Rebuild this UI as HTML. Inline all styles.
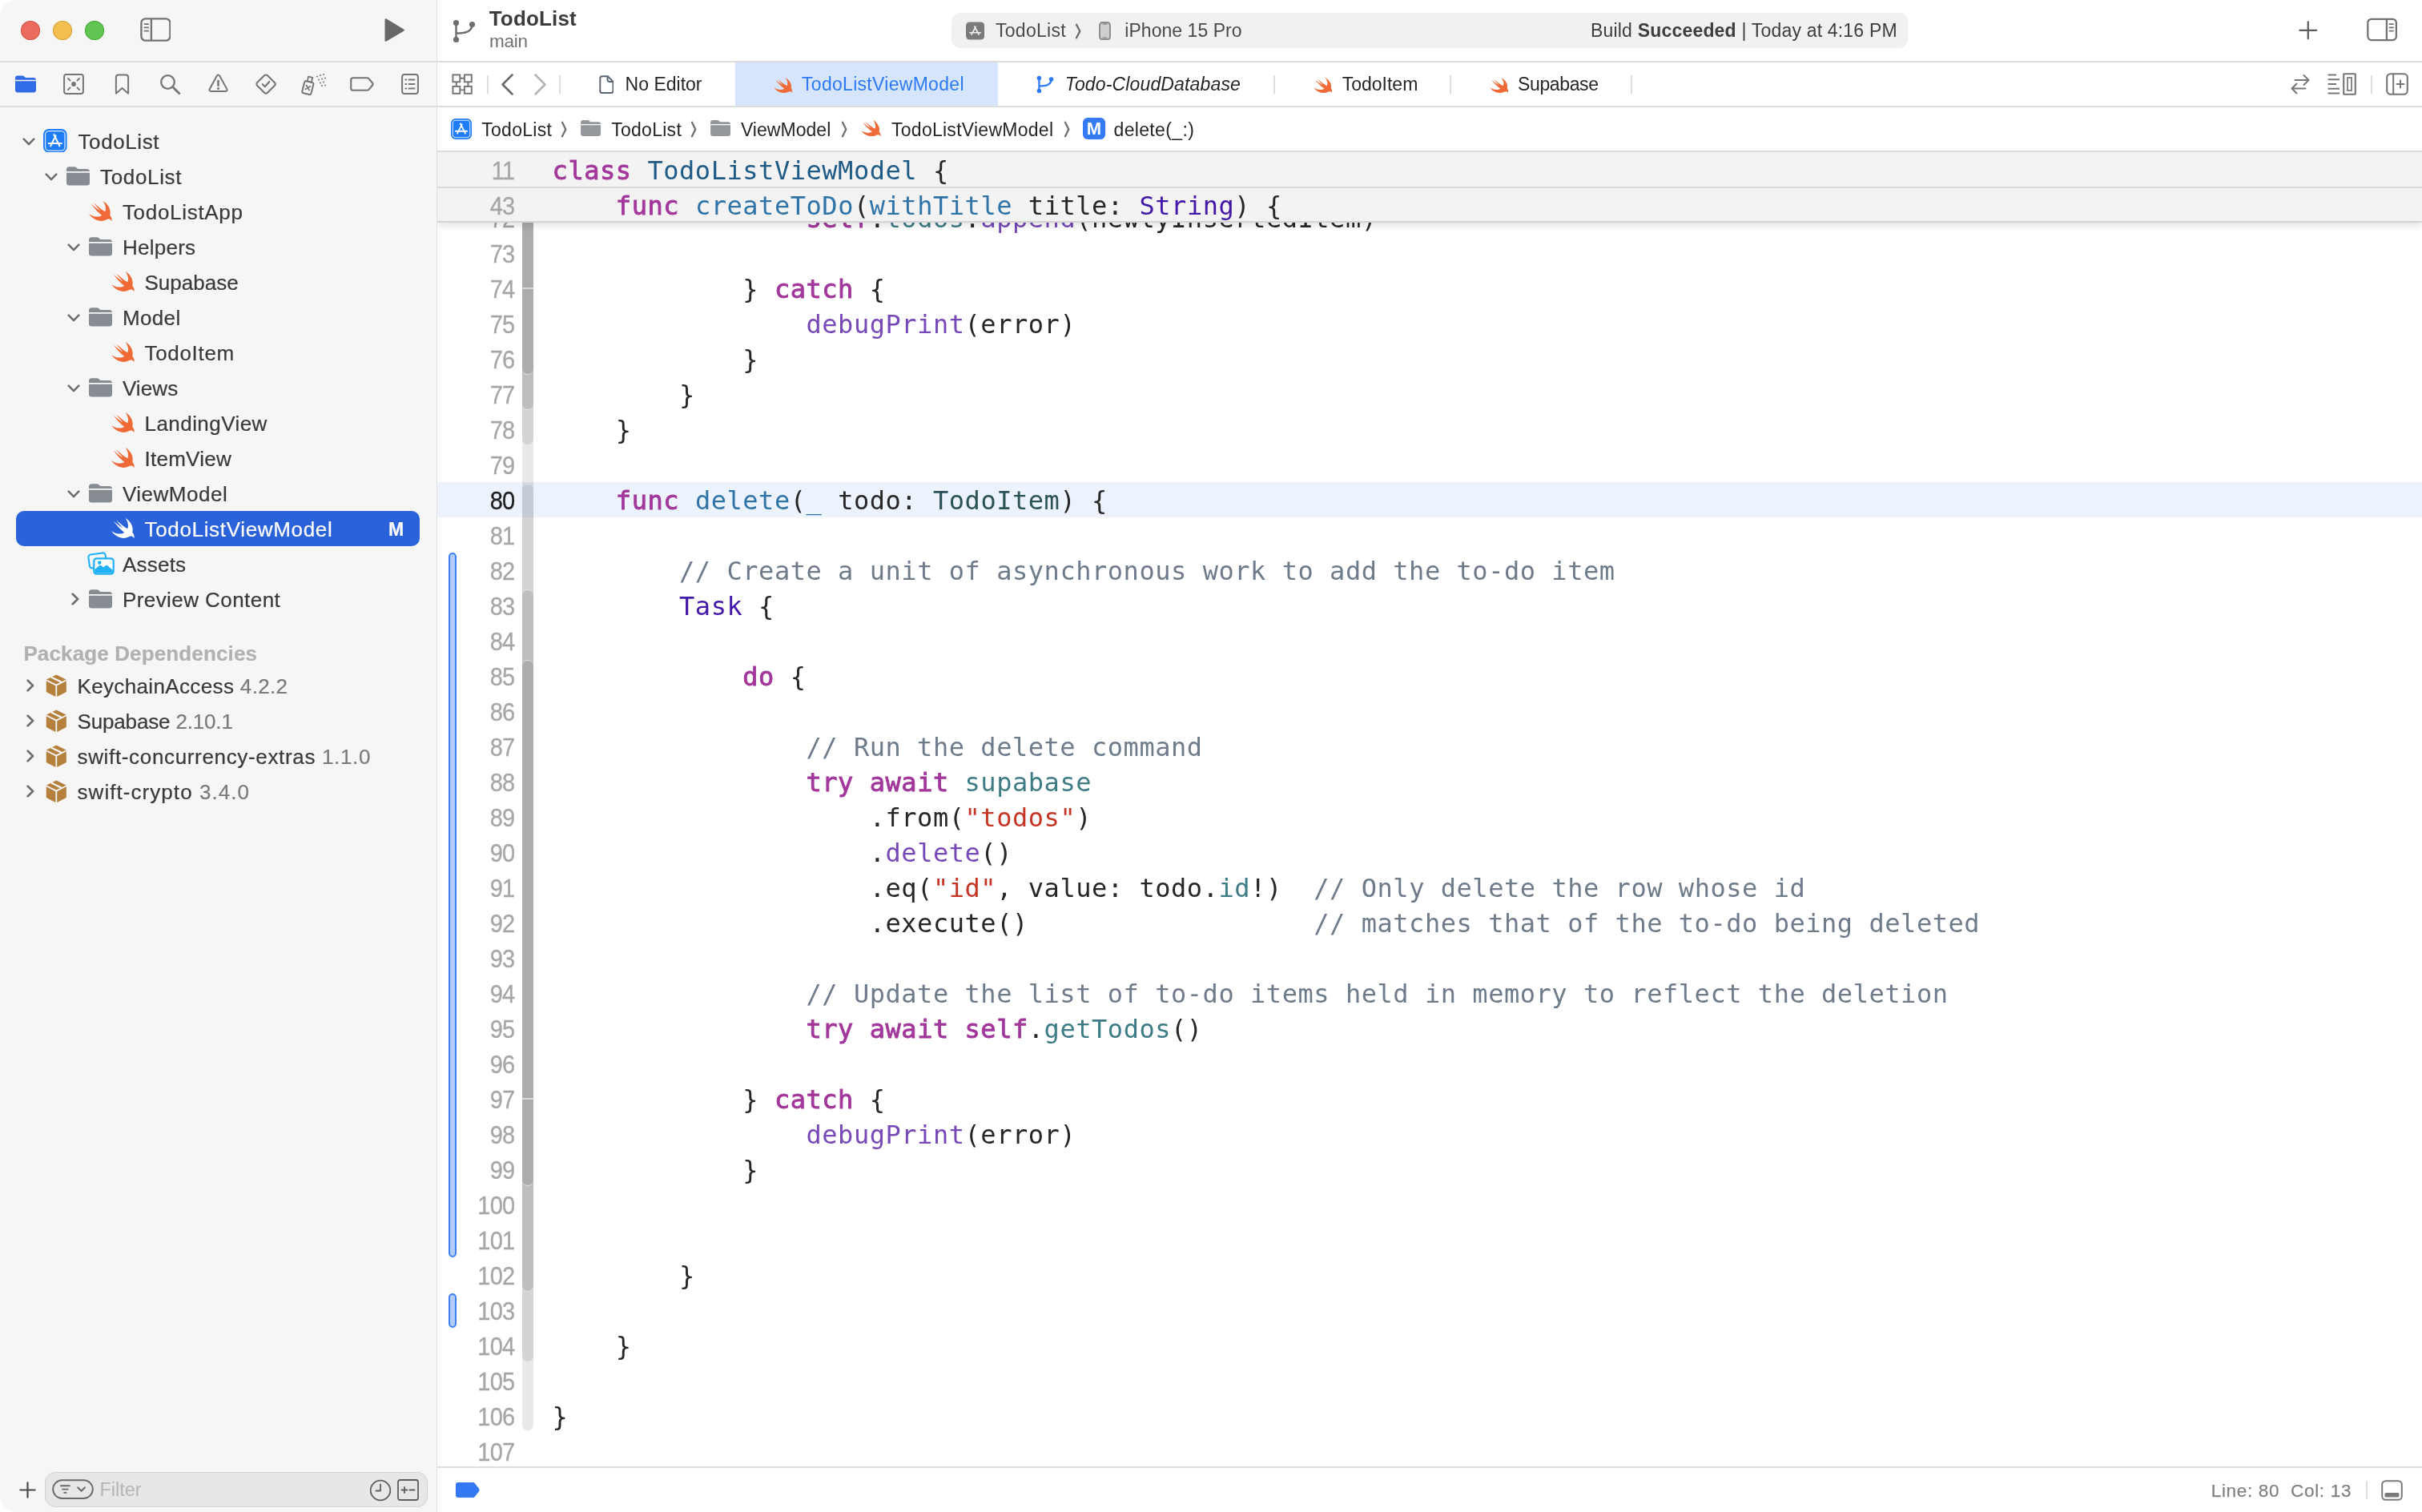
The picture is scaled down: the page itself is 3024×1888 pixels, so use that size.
<!DOCTYPE html>
<html lang="en"><head><meta charset="utf-8"><title>TodoList — TodoListViewModel.swift</title>
<style>
html,body{margin:0;padding:0}
body{width:3024px;height:1888px;position:relative;overflow:hidden;background:#fff;font-family:"Liberation Sans",Arial,sans-serif;color:#2b2b2b;-webkit-font-smoothing:antialiased;will-change:transform}
.abs{position:absolute;display:block}
.t{position:absolute;white-space:pre;line-height:1}
#sidebar{position:absolute;left:0;top:0;width:545px;height:1888px;background:#f6f6f6;border-radius:21px 0 0 21px}
.hl{position:absolute;background:#dcdcdc}
.row{position:absolute;left:0;height:44px;line-height:46px;font-size:26px;white-space:pre;color:#3a3a3a;letter-spacing:.4px;-webkit-text-stroke:.22px currentColor}
.code{position:absolute;left:689.6px;height:44px;line-height:46px;white-space:pre;font-family:"DejaVu Sans Mono","Liberation Mono",monospace;font-size:32px;letter-spacing:.54px;color:#262626}
.code span{display:inline}
.ln{position:absolute;left:546px;width:96.5px;height:44px;line-height:46px;text-align:right;font-size:29px;letter-spacing:-.7px;color:#a6a6a6;transform:scaleY(1.075);-webkit-text-stroke:.3px currentColor}
.k{color:#a2379b;-webkit-text-stroke:.85px #a2379b}
.ty{color:#1d5a85}
.d{color:#2f74a8}
.s{color:#4318a8}
.f{color:#7748b8}
.p{color:#3e7c85}
.pt{color:#2a5257}
.c{color:#6e7b8a}
.r{color:#c63524}
.tab{position:absolute;top:78px;height:55px;line-height:55px;font-size:23px;letter-spacing:.12px;white-space:pre;color:#262626}
.bc{position:absolute;top:134.700px;height:54px;line-height:54px;font-size:23px;letter-spacing:.1px;white-space:pre;color:#262626}
.sep{position:absolute;width:2px;background:#dedede}
</style></head><body>

<div id="sidebar"></div>
<div class="hl" style="left:0;top:76px;width:3024px;height:2px;background:#dddddd"></div>
<div class="hl" style="left:0;top:132px;width:3024px;height:2px;background:#dddddd"></div>
<div class="hl" style="left:544.500px;top:0;width:1.500px;height:1888px;background:#e0e0e0"></div>
<div class="abs" style="left:26px;top:26px;width:24px;height:24px;border-radius:50%;background:#ec6a5e;box-shadow:inset 0 0 0 1px #d5574b"></div>
<div class="abs" style="left:66px;top:26px;width:24px;height:24px;border-radius:50%;background:#f4bf4f;box-shadow:inset 0 0 0 1px #d8a23a"></div>
<div class="abs" style="left:106px;top:26px;width:24px;height:24px;border-radius:50%;background:#61c554;box-shadow:inset 0 0 0 1px #4ca93e"></div>
<svg class="abs" style="left:174.700px;top:22.200px" width="38.800" height="30" viewBox="0 0 40 31"><rect x="1.4" y="1.4" width="37.2" height="28.2" rx="5.5" fill="none" stroke="#727272" stroke-width="2.4"/><path d="M14.300 1.400v28.200" stroke="#727272" stroke-width="2.4"/><path d="M5.500 8.300h5M5.500 12.800h5M5.500 17.300h5" stroke="#727272" stroke-width="1.800" stroke-linecap="round"/></svg>
<svg class="abs" style="left:478px;top:23px" width="28" height="30" viewBox="0 0 28 30"><path d="M2.500 1.800c0-1.200 1.100-1.800 2.100-1.200l21.500 12.800c1 .6 1 1.800 0 2.400L4.600 28.600c-1 .6-2.100 0-2.100-1.200z" fill="#696969"/></svg>
<svg class="abs" style="left:19px;top:94px" width="26" height="22" viewBox="0 0 30 24"><path fill="#2f6ce6" d="M3.2 0h7.2c1 0 1.7.3 2.4 1l1 1c.5.5 1 .7 1.8.7h11.2c1.8 0 3.2 1.4 3.2 3.2V6H0V3.2C0 1.4 1.4 0 3.2 0z"/><path fill="#2f6ce6" d="M0 7.6h30v13.2c0 1.8-1.4 3.2-3.2 3.2H3.2C1.4 24 0 22.600 0 20.8z"/></svg>
<svg class="abs" style="left:79px;top:92px" width="26" height="26" viewBox="0 0 26 26"><rect x="1.100" y="1.100" width="23.800" height="23.800" rx="2.600" fill="none" stroke="#767676" stroke-width="2"/><path d="M5.900 5.900 8.500 8.500M20.100 5.900 17.500 8.500M5.900 20.100 8.500 17.500M20.100 20.100 17.500 17.500" stroke="#767676" stroke-width="1.900" stroke-linecap="round"/><circle cx="13" cy="13" r="2.900" fill="#767676"/></svg>
<svg class="abs" style="left:142.500px;top:91.500px" width="19" height="27" viewBox="0 0 19 27"><path d="M1.900 4.400c0-1.800 1.100-2.900 2.900-2.900h9.400c1.800 0 2.900 1.100 2.900 2.900v20.300L9.500 18 1.900 24.700z" fill="none" stroke="#767676" stroke-width="2" stroke-linejoin="round"/></svg>
<svg class="abs" style="left:199px;top:92px" width="27" height="27" viewBox="0 0 27 27"><circle cx="10.500" cy="10.500" r="8.300" fill="none" stroke="#767676" stroke-width="2.300"/><path d="M16.800 16.800 24.800 24.800" stroke="#767676" stroke-width="2.800" stroke-linecap="round"/></svg>
<svg class="abs" style="left:259.500px;top:91.500px" width="25" height="25" viewBox="0 0 26 26"><path d="M11.300 2.700c.8-1.400 2.600-1.400 3.400 0l9.500 17.200c.8 1.400 0 2.900-1.700 2.900H3.500c-1.700 0-2.500-1.500-1.700-2.900z" fill="none" stroke="#767676" stroke-width="2.100" stroke-linejoin="round"/><path d="M13 9.500v5.800" stroke="#767676" stroke-width="2.700" stroke-linecap="round"/><circle cx="13" cy="19.200" r="1.600" fill="#767676"/></svg>
<svg class="abs" style="left:318px;top:91px" width="28" height="28" viewBox="0 0 28 28"><rect x="5" y="5" width="18" height="18" rx="2.800" transform="rotate(45 14 14)" fill="none" stroke="#767676" stroke-width="2.100"/><path d="M9.800 14.200 12.800 17.200 18.300 11" fill="none" stroke="#767676" stroke-width="2.100" stroke-linecap="round" stroke-linejoin="round"/></svg>
<svg class="abs" style="left:376px;top:91px" width="33" height="29" viewBox="0 0 33 29"><g transform="rotate(14 9 17)"><rect x="3" y="11" width="11.500" height="15.500" rx="2" fill="none" stroke="#767676" stroke-width="2"/><rect x="6.200" y="5" width="5.200" height="6" fill="none" stroke="#767676" stroke-width="1.800"/><path d="M6.200 16.200 11.200 21.200M11.200 16.200 6.200 21.200" stroke="#767676" stroke-width="1.700" stroke-linecap="round"/></g><g fill="#767676"><circle cx="20" cy="4.500" r="1"/><circle cx="24" cy="3" r="1"/><circle cx="28" cy="2" r="1"/><circle cx="22" cy="8.500" r="1"/><circle cx="26" cy="7.500" r="1"/><circle cx="30" cy="6.500" r="1"/><circle cx="24" cy="12.500" r="1"/><circle cx="28" cy="11.500" r="1"/><circle cx="30" cy="15.500" r="1"/><circle cx="26" cy="16" r="1"/></g></svg>
<svg class="abs" style="left:436.500px;top:96px" width="30" height="18" viewBox="0 0 32 20" preserveAspectRatio="none"><path d="M4.200 1.300h18.500c1 0 1.700.4 2.300 1.100l5 6.200c.7.900.7 1.900 0 2.800l-5 6.200c-.6.700-1.300 1.100-2.300 1.100H4.200c-1.700 0-2.900-1.200-2.900-2.900V4.200c0-1.700 1.200-2.900 2.900-2.900z" fill="none" stroke="#767676" stroke-width="2.300"/></svg>
<svg class="abs" style="left:501px;top:92px" width="22" height="26" viewBox="0 0 22 26"><rect x="1.100" y="1.100" width="19.800" height="23.800" rx="3" fill="none" stroke="#767676" stroke-width="2"/><path d="M9.500 7.500h7M9.500 13h7M9.500 18.500h7" stroke="#767676" stroke-width="1.900" stroke-linecap="round"/><path d="M5.300 7.500h1M5.300 13h1M5.300 18.500h1" stroke="#767676" stroke-width="1.900" stroke-linecap="round"/></svg>
<svg class="abs" style="left:28px;top:172px" width="16" height="10" viewBox="0 0 16 10"><path d="M1.700 1.700 8 8.100 14.300 1.700" fill="none" stroke="#6e6e6e" stroke-width="2.600" stroke-linecap="round" stroke-linejoin="round"/></svg>
<svg class="abs" style="left:54.4px;top:160.9px" width="29.6" height="29.6" viewBox="0 0 30 30"><rect x="0" y="0" width="30" height="30" rx="7" fill="#1f7cf7"/><rect x="2.6" y="2.6" width="24.8" height="24.800" rx="4.6" fill="none" stroke="#fff" stroke-opacity=".8" stroke-width="1.300"/><path d="M9.300 21.500 15.800 8.500M20.700 21.500 13.600 7.300M6.800 18.200H23.200" fill="none" stroke="#fff" stroke-width="2.1" stroke-linecap="round"/></svg>
<div class="row" style="left:97.5px;top:154px;color:#3a3a3a;letter-spacing:0.607px">TodoList</div>
<svg class="abs" style="left:56px;top:216px" width="16" height="10" viewBox="0 0 16 10"><path d="M1.700 1.700 8 8.100 14.300 1.700" fill="none" stroke="#6e6e6e" stroke-width="2.600" stroke-linecap="round" stroke-linejoin="round"/></svg>
<svg class="abs" style="left:82.9px;top:208px" width="29" height="23.8" viewBox="0 0 30 24"><path fill="#878c93" d="M3.2 0h7.2c1 0 1.7.3 2.4 1l1 1c.5.5 1 .7 1.8.7h11.2c1.8 0 3.2 1.4 3.2 3.2V6H0V3.2C0 1.4 1.4 0 3.2 0z"/><path fill="#878c93" d="M0 7.6h30v13.2c0 1.8-1.4 3.2-3.2 3.2H3.2C1.4 24 0 22.600 0 20.8z"/></svg>
<div class="row" style="left:125.0px;top:198px;color:#3a3a3a;letter-spacing:0.664px">TodoList</div>
<svg class="abs" style="left:111.1px;top:250.8px" width="28.6" height="25" viewBox="2.42 3.42 18.1 16.19" preserveAspectRatio="none"><path fill="#f06a37" d="M13.543 3.41c4.114 2.47 6.545 7.162 5.549 11.131-.024.093-.05.181-.076.272l.002.001c2.062 2.538 1.5 5.258 1.236 4.745-1.072-2.086-3.066-1.568-4.088-1.043a6.803 6.803 0 0 1-.281.158l-.02.012-.002.002c-2.115 1.123-4.957 1.205-7.812-.022a12.568 12.568 0 0 1-5.64-4.838c.649.48 1.35.902 2.097 1.252 3.019 1.414 6.051 1.311 8.197-.002C9.651 12.73 7.101 9.67 5.146 7.191a10.628 10.628 0 0 1-1.005-1.384c2.34 2.142 6.038 4.83 7.365 5.576C8.69 8.408 6.208 4.743 6.324 4.86c4.436 4.47 8.528 6.996 8.528 6.996.154.085.27.154.36.213.085-.215.16-.437.224-.668.708-2.588-.09-5.548-1.893-7.992z"/></svg>
<div class="row" style="left:152.9px;top:242px;color:#3a3a3a;letter-spacing:0.697px">TodoListApp</div>
<svg class="abs" style="left:84px;top:304px" width="16" height="10" viewBox="0 0 16 10"><path d="M1.700 1.700 8 8.100 14.300 1.700" fill="none" stroke="#6e6e6e" stroke-width="2.600" stroke-linecap="round" stroke-linejoin="round"/></svg>
<svg class="abs" style="left:110.9px;top:296px" width="29" height="23.8" viewBox="0 0 30 24"><path fill="#878c93" d="M3.2 0h7.2c1 0 1.7.3 2.4 1l1 1c.5.5 1 .7 1.8.7h11.2c1.8 0 3.2 1.4 3.2 3.2V6H0V3.2C0 1.4 1.4 0 3.2 0z"/><path fill="#878c93" d="M0 7.6h30v13.2c0 1.8-1.4 3.2-3.2 3.2H3.2C1.4 24 0 22.600 0 20.8z"/></svg>
<div class="row" style="left:152.9px;top:286px;color:#3a3a3a;letter-spacing:0.272px">Helpers</div>
<svg class="abs" style="left:139.1px;top:338.8px" width="28.6" height="25" viewBox="2.42 3.42 18.1 16.19" preserveAspectRatio="none"><path fill="#f06a37" d="M13.543 3.41c4.114 2.47 6.545 7.162 5.549 11.131-.024.093-.05.181-.076.272l.002.001c2.062 2.538 1.5 5.258 1.236 4.745-1.072-2.086-3.066-1.568-4.088-1.043a6.803 6.803 0 0 1-.281.158l-.02.012-.002.002c-2.115 1.123-4.957 1.205-7.812-.022a12.568 12.568 0 0 1-5.64-4.838c.649.48 1.35.902 2.097 1.252 3.019 1.414 6.051 1.311 8.197-.002C9.651 12.73 7.101 9.67 5.146 7.191a10.628 10.628 0 0 1-1.005-1.384c2.34 2.142 6.038 4.83 7.365 5.576C8.69 8.408 6.208 4.743 6.324 4.86c4.436 4.47 8.528 6.996 8.528 6.996.154.085.27.154.36.213.085-.215.16-.437.224-.668.708-2.588-.09-5.548-1.893-7.992z"/></svg>
<div class="row" style="left:180.5px;top:330px;color:#3a3a3a;letter-spacing:0.024px">Supabase</div>
<svg class="abs" style="left:84px;top:392px" width="16" height="10" viewBox="0 0 16 10"><path d="M1.700 1.700 8 8.100 14.300 1.700" fill="none" stroke="#6e6e6e" stroke-width="2.600" stroke-linecap="round" stroke-linejoin="round"/></svg>
<svg class="abs" style="left:110.9px;top:384px" width="29" height="23.8" viewBox="0 0 30 24"><path fill="#878c93" d="M3.2 0h7.2c1 0 1.7.3 2.4 1l1 1c.5.5 1 .7 1.8.7h11.2c1.8 0 3.2 1.4 3.2 3.2V6H0V3.2C0 1.4 1.4 0 3.2 0z"/><path fill="#878c93" d="M0 7.6h30v13.2c0 1.8-1.4 3.2-3.2 3.2H3.2C1.4 24 0 22.600 0 20.8z"/></svg>
<div class="row" style="left:152.9px;top:374px;color:#3a3a3a;letter-spacing:0.379px">Model</div>
<svg class="abs" style="left:139.1px;top:426.8px" width="28.6" height="25" viewBox="2.42 3.42 18.1 16.19" preserveAspectRatio="none"><path fill="#f06a37" d="M13.543 3.41c4.114 2.47 6.545 7.162 5.549 11.131-.024.093-.05.181-.076.272l.002.001c2.062 2.538 1.5 5.258 1.236 4.745-1.072-2.086-3.066-1.568-4.088-1.043a6.803 6.803 0 0 1-.281.158l-.02.012-.002.002c-2.115 1.123-4.957 1.205-7.812-.022a12.568 12.568 0 0 1-5.64-4.838c.649.48 1.35.902 2.097 1.252 3.019 1.414 6.051 1.311 8.197-.002C9.651 12.73 7.101 9.67 5.146 7.191a10.628 10.628 0 0 1-1.005-1.384c2.34 2.142 6.038 4.83 7.365 5.576C8.69 8.408 6.208 4.743 6.324 4.86c4.436 4.47 8.528 6.996 8.528 6.996.154.085.27.154.36.213.085-.215.16-.437.224-.668.708-2.588-.09-5.548-1.893-7.992z"/></svg>
<div class="row" style="left:180.5px;top:418px;color:#3a3a3a;letter-spacing:0.682px">TodoItem</div>
<svg class="abs" style="left:84px;top:480px" width="16" height="10" viewBox="0 0 16 10"><path d="M1.700 1.700 8 8.100 14.300 1.700" fill="none" stroke="#6e6e6e" stroke-width="2.600" stroke-linecap="round" stroke-linejoin="round"/></svg>
<svg class="abs" style="left:110.9px;top:472px" width="29" height="23.8" viewBox="0 0 30 24"><path fill="#878c93" d="M3.2 0h7.2c1 0 1.7.3 2.4 1l1 1c.5.5 1 .7 1.8.7h11.2c1.8 0 3.2 1.4 3.2 3.2V6H0V3.2C0 1.4 1.4 0 3.2 0z"/><path fill="#878c93" d="M0 7.6h30v13.2c0 1.8-1.4 3.2-3.2 3.2H3.2C1.4 24 0 22.600 0 20.8z"/></svg>
<div class="row" style="left:152.9px;top:462px;color:#3a3a3a;letter-spacing:0.1px">Views</div>
<svg class="abs" style="left:139.1px;top:514.8px" width="28.6" height="25" viewBox="2.42 3.42 18.1 16.19" preserveAspectRatio="none"><path fill="#f06a37" d="M13.543 3.41c4.114 2.47 6.545 7.162 5.549 11.131-.024.093-.05.181-.076.272l.002.001c2.062 2.538 1.5 5.258 1.236 4.745-1.072-2.086-3.066-1.568-4.088-1.043a6.803 6.803 0 0 1-.281.158l-.02.012-.002.002c-2.115 1.123-4.957 1.205-7.812-.022a12.568 12.568 0 0 1-5.64-4.838c.649.48 1.35.902 2.097 1.252 3.019 1.414 6.051 1.311 8.197-.002C9.651 12.73 7.101 9.67 5.146 7.191a10.628 10.628 0 0 1-1.005-1.384c2.34 2.142 6.038 4.83 7.365 5.576C8.69 8.408 6.208 4.743 6.324 4.86c4.436 4.47 8.528 6.996 8.528 6.996.154.085.27.154.36.213.085-.215.16-.437.224-.668.708-2.588-.09-5.548-1.893-7.992z"/></svg>
<div class="row" style="left:180.5px;top:506px;color:#3a3a3a;letter-spacing:0.447px">LandingView</div>
<svg class="abs" style="left:139.1px;top:558.8px" width="28.6" height="25" viewBox="2.42 3.42 18.1 16.19" preserveAspectRatio="none"><path fill="#f06a37" d="M13.543 3.41c4.114 2.47 6.545 7.162 5.549 11.131-.024.093-.05.181-.076.272l.002.001c2.062 2.538 1.5 5.258 1.236 4.745-1.072-2.086-3.066-1.568-4.088-1.043a6.803 6.803 0 0 1-.281.158l-.02.012-.002.002c-2.115 1.123-4.957 1.205-7.812-.022a12.568 12.568 0 0 1-5.64-4.838c.649.48 1.35.902 2.097 1.252 3.019 1.414 6.051 1.311 8.197-.002C9.651 12.73 7.101 9.67 5.146 7.191a10.628 10.628 0 0 1-1.005-1.384c2.34 2.142 6.038 4.83 7.365 5.576C8.69 8.408 6.208 4.743 6.324 4.86c4.436 4.47 8.528 6.996 8.528 6.996.154.085.27.154.36.213.085-.215.16-.437.224-.668.708-2.588-.09-5.548-1.893-7.992z"/></svg>
<div class="row" style="left:180.5px;top:550px;color:#3a3a3a;letter-spacing:0.252px">ItemView</div>
<svg class="abs" style="left:84px;top:612px" width="16" height="10" viewBox="0 0 16 10"><path d="M1.700 1.700 8 8.100 14.300 1.700" fill="none" stroke="#6e6e6e" stroke-width="2.600" stroke-linecap="round" stroke-linejoin="round"/></svg>
<svg class="abs" style="left:110.9px;top:604px" width="29" height="23.8" viewBox="0 0 30 24"><path fill="#878c93" d="M3.2 0h7.2c1 0 1.7.3 2.4 1l1 1c.5.5 1 .7 1.8.7h11.2c1.8 0 3.2 1.4 3.2 3.2V6H0V3.2C0 1.4 1.4 0 3.2 0z"/><path fill="#878c93" d="M0 7.6h30v13.2c0 1.8-1.4 3.2-3.2 3.2H3.2C1.4 24 0 22.600 0 20.8z"/></svg>
<div class="row" style="left:152.9px;top:594px;color:#3a3a3a;letter-spacing:0.514px">ViewModel</div>
<div class="abs" style="left:20px;top:638px;width:504px;height:44px;border-radius:10px;background:#2a62d9"></div>
<svg class="abs" style="left:139.1px;top:646.8px" width="28.6" height="25" viewBox="2.42 3.42 18.1 16.19" preserveAspectRatio="none"><path fill="#fff" d="M13.543 3.41c4.114 2.47 6.545 7.162 5.549 11.131-.024.093-.05.181-.076.272l.002.001c2.062 2.538 1.5 5.258 1.236 4.745-1.072-2.086-3.066-1.568-4.088-1.043a6.803 6.803 0 0 1-.281.158l-.02.012-.002.002c-2.115 1.123-4.957 1.205-7.812-.022a12.568 12.568 0 0 1-5.64-4.838c.649.48 1.35.902 2.097 1.252 3.019 1.414 6.051 1.311 8.197-.002C9.651 12.73 7.101 9.67 5.146 7.191a10.628 10.628 0 0 1-1.005-1.384c2.34 2.142 6.038 4.83 7.365 5.576C8.69 8.408 6.208 4.743 6.324 4.86c4.436 4.47 8.528 6.996 8.528 6.996.154.085.27.154.36.213.085-.215.16-.437.224-.668.708-2.588-.09-5.548-1.893-7.992z"/></svg>
<div class="row" style="left:180.5px;top:638px;color:#fff;letter-spacing:0.667px">TodoListViewModel</div>
<div class="row" style="left:485px;top:638px;color:#fff;font-weight:bold;font-size:23px">M</div>
<svg class="abs" style="left:108.5px;top:688.5px" width="34" height="29" viewBox="0 0 34 29"><g transform="rotate(-8 12 11)"><rect x="2" y="2.500" width="21.500" height="17" rx="3.200" fill="none" stroke="#1fb0f8" stroke-width="2.100"/></g><rect x="8.300" y="8.300" width="24.400" height="19.400" rx="3.400" fill="#fff" stroke="#1fb0f8" stroke-width="2.200"/><path d="M9.400 25.500v-3.500l5.600-4.700c.8-.7 1.700-.7 2.500 0l2.600 2.300 2.700-2.300c.8-.7 1.700-.7 2.500 0l6.300 5.400v2.800c0 .600-.500 1.100-1.100 1.100H10.500c-.600 0-1.100-.500-1.100-1.100z" fill="#1fb0f8"/><circle cx="15.300" cy="13.600" r="2.300" fill="#1fb0f8"/></svg>
<div class="row" style="left:152.9px;top:682px;color:#3a3a3a;letter-spacing:0.24px">Assets</div>
<svg class="abs" style="left:89px;top:740px" width="10" height="16" viewBox="0 0 10 16"><path d="M1.700 1.700 8.100 8 1.700 14.300" fill="none" stroke="#6e6e6e" stroke-width="2.600" stroke-linecap="round" stroke-linejoin="round"/></svg>
<svg class="abs" style="left:110.9px;top:736px" width="29" height="23.8" viewBox="0 0 30 24"><path fill="#878c93" d="M3.2 0h7.2c1 0 1.7.3 2.4 1l1 1c.5.5 1 .7 1.8.7h11.2c1.8 0 3.2 1.4 3.2 3.2V6H0V3.2C0 1.4 1.4 0 3.2 0z"/><path fill="#878c93" d="M0 7.6h30v13.2c0 1.8-1.4 3.2-3.2 3.2H3.2C1.4 24 0 22.600 0 20.8z"/></svg>
<div class="row" style="left:152.9px;top:726px;color:#3a3a3a;letter-spacing:0.438px">Preview Content</div>
<div class="row" style="left:29.4px;top:793px;color:#b1b1b1;font-weight:bold;letter-spacing:0.134px">Package Dependencies</div>
<svg class="abs" style="left:33.2px;top:847.6px" width="10" height="16" viewBox="0 0 10 16"><path d="M1.700 1.700 8.100 8 1.700 14.300" fill="none" stroke="#6e6e6e" stroke-width="2.600" stroke-linecap="round" stroke-linejoin="round"/></svg>
<svg class="abs" style="left:56.6px;top:842.0px" width="26.6" height="28.5" viewBox="0 0 28 30"><path fill="#b5803c" d="M14 0.500 27 6.800 14 13.200 1 6.800z"/><path fill="#b5803c" d="M0.800 8.800 13 14.900V29.500L0.800 23.200z"/><path fill="#b5803c" d="M27.200 8.800 15 14.900V29.500L27.200 23.200z"/><path d="M7.300 3.600 20.800 10.200" fill="none" stroke="#f6f6f6" stroke-width="2.400"/></svg>
<div class="row" style="left:96.5px;top:834.4px;letter-spacing:0.356px">KeychainAccess <span style="color:#7b7b7b">4.2.2</span></div>
<svg class="abs" style="left:33.2px;top:891.6px" width="10" height="16" viewBox="0 0 10 16"><path d="M1.700 1.700 8.100 8 1.700 14.300" fill="none" stroke="#6e6e6e" stroke-width="2.600" stroke-linecap="round" stroke-linejoin="round"/></svg>
<svg class="abs" style="left:56.6px;top:886.0px" width="26.6" height="28.5" viewBox="0 0 28 30"><path fill="#b5803c" d="M14 0.500 27 6.800 14 13.200 1 6.800z"/><path fill="#b5803c" d="M0.800 8.800 13 14.900V29.500L0.800 23.200z"/><path fill="#b5803c" d="M27.200 8.800 15 14.900V29.500L27.200 23.200z"/><path d="M7.300 3.600 20.800 10.200" fill="none" stroke="#f6f6f6" stroke-width="2.400"/></svg>
<div class="row" style="left:96.5px;top:878.4px;letter-spacing:-0.159px">Supabase <span style="color:#7b7b7b">2.10.1</span></div>
<svg class="abs" style="left:33.2px;top:935.6px" width="10" height="16" viewBox="0 0 10 16"><path d="M1.700 1.700 8.100 8 1.700 14.300" fill="none" stroke="#6e6e6e" stroke-width="2.600" stroke-linecap="round" stroke-linejoin="round"/></svg>
<svg class="abs" style="left:56.6px;top:930.0px" width="26.6" height="28.5" viewBox="0 0 28 30"><path fill="#b5803c" d="M14 0.500 27 6.800 14 13.200 1 6.800z"/><path fill="#b5803c" d="M0.800 8.800 13 14.900V29.500L0.800 23.200z"/><path fill="#b5803c" d="M27.200 8.800 15 14.900V29.500L27.200 23.200z"/><path d="M7.300 3.600 20.800 10.200" fill="none" stroke="#f6f6f6" stroke-width="2.400"/></svg>
<div class="row" style="left:96.5px;top:922.4px;letter-spacing:0.659px">swift-concurrency-extras <span style="color:#7b7b7b">1.1.0</span></div>
<svg class="abs" style="left:33.2px;top:979.6px" width="10" height="16" viewBox="0 0 10 16"><path d="M1.700 1.700 8.100 8 1.700 14.300" fill="none" stroke="#6e6e6e" stroke-width="2.600" stroke-linecap="round" stroke-linejoin="round"/></svg>
<svg class="abs" style="left:56.6px;top:974.0px" width="26.6" height="28.5" viewBox="0 0 28 30"><path fill="#b5803c" d="M14 0.500 27 6.800 14 13.200 1 6.800z"/><path fill="#b5803c" d="M0.800 8.800 13 14.900V29.500L0.800 23.200z"/><path fill="#b5803c" d="M27.200 8.800 15 14.900V29.500L27.200 23.200z"/><path d="M7.300 3.600 20.800 10.200" fill="none" stroke="#f6f6f6" stroke-width="2.400"/></svg>
<div class="row" style="left:96.5px;top:966.4px;letter-spacing:1.059px">swift-crypto <span style="color:#7b7b7b">3.4.0</span></div>
<svg class="abs" style="left:24px;top:1850px" width="21" height="21" viewBox="0 0 23 23"><path d="M11.500 1.500v20M1.500 11.500h20" stroke="#4a4a4a" stroke-width="2.400" stroke-linecap="round"/></svg>
<div class="abs" style="left:56px;top:1838px;width:476px;height:42px;border-radius:13px;background:#e7e7e7;border:1px solid #d2d2d2"></div>
<svg class="abs" style="left:65px;top:1847.400px" width="52" height="25.200" viewBox="0 0 54 26"><rect x="1.200" y="1.200" width="51.600" height="23.600" rx="11.800" fill="none" stroke="#6a6a6a" stroke-width="2"/><path d="M10.500 8.500h13M12.800 13h8.400M15 17.500h4" stroke="#6a6a6a" stroke-width="1.900"/><path d="M33.500 10.800 38 15.200 42.500 10.800" fill="none" stroke="#6a6a6a" stroke-width="2.200" stroke-linecap="round" stroke-linejoin="round"/></svg>
<div class="t" style="left:124.5px;top:1847px;font-size:23.500px;line-height:26px;color:#b5b5b5;letter-spacing:-0.006px">Filter</div>
<svg class="abs" style="left:461px;top:1847px" width="28" height="28" viewBox="0 0 28 28"><circle cx="14" cy="14" r="12.300" fill="none" stroke="#5e5e5e" stroke-width="1.800"/><path d="M14 6.500V14.500H8.500" fill="none" stroke="#5e5e5e" stroke-width="1.800" stroke-linecap="round" stroke-linejoin="round"/></svg>
<svg class="abs" style="left:496px;top:1847px" width="27" height="27" viewBox="0 0 27 27"><rect x="1" y="1" width="25" height="25" rx="2.500" fill="none" stroke="#5e5e5e" stroke-width="1.800"/><path d="M5.500 13.500h7M9 10v7M15.500 13.500h6" stroke="#5e5e5e" stroke-width="1.800" stroke-linecap="round"/></svg>
<svg class="abs" style="left:565px;top:23.5px" width="29" height="30" viewBox="0 0 29 30"><circle cx="4.500" cy="4.500" r="3.600" fill="#6e6e6e"/><circle cx="4.500" cy="25.500" r="3.600" fill="#6e6e6e"/><circle cx="24.500" cy="6.500" r="3.600" fill="#6e6e6e"/><path d="M4.500 4.500v21M4.500 17.500c11 0 20-1.500 20-11" fill="none" stroke="#6e6e6e" stroke-width="2.4"/></svg>
<div class="t" style="left:610.7px;top:8px;font-size:26px;line-height:30px;font-weight:bold;color:#3c3c3c;letter-spacing:0.181px">TodoList</div>
<div class="t" style="left:610.9px;top:38px;font-size:22.500px;line-height:28px;color:#707070;letter-spacing:-0.223px">main</div>
<div class="abs" style="left:1188px;top:16px;width:1194px;height:44px;border-radius:11px;background:#f1f1f1"></div>
<svg class="abs" style="left:1206px;top:27px" width="23.200" height="23" viewBox="0 0 24 23"><rect width="24" height="23" rx="5" fill="#7b7b7b"/><path d="M7.200 16.200 12.600 6.500M16.800 16.200 11 5.800M5 13.800H19" fill="none" stroke="#efefef" stroke-width="1.700" stroke-linecap="round"/></svg>
<div class="t" style="left:1243.0px;top:24px;font-size:23px;line-height:28px;color:#4a4a4a;letter-spacing:0.289px">TodoList</div>
<svg class="abs" style="left:1342px;top:28.500px" width="9" height="20" viewBox="0 0 9 20"><path d="M2 1.800 6.300 10 2 18.200" fill="none" stroke="#6a6a6a" stroke-width="2.300" stroke-linecap="round" stroke-linejoin="round"/></svg>
<svg class="abs" style="left:1372.300px;top:26.500px" width="15" height="23.500" viewBox="0 0 18 25" preserveAspectRatio="none"><rect x="1.200" y="1.200" width="15.600" height="22.600" rx="3.600" fill="#cfcfcf" stroke="#8a8a8a" stroke-width="2.200"/><path d="M6 21.500h6" stroke="#8a8a8a" stroke-width="1.300" stroke-linecap="round"/><path d="M6.500 3.300h5" stroke="#8a8a8a" stroke-width="1.600" stroke-linecap="round"/></svg>
<div class="t" style="left:1404.3px;top:24px;font-size:23px;line-height:28px;color:#4a4a4a;letter-spacing:0.036px">iPhone 15 Pro</div>
<div class="t" style="left:1986px;top:24px;font-size:23px;line-height:28px;color:#3d3d3d;letter-spacing:.19px">Build <b>Succeeded</b> | Today at 4:16 PM</div>
<svg class="abs" style="left:2870px;top:26.200px" width="23.600" height="23.600" viewBox="0 0 25 25"><path d="M12.500 1.500v22M1.500 12.500h22" stroke="#5c5c5c" stroke-width="2.400" stroke-linecap="round"/></svg>
<svg class="abs" style="left:2955.200px;top:22px" width="38.200" height="29.800" viewBox="0 0 41 31"><rect x="1.400" y="1.400" width="38.200" height="28.200" rx="5" fill="none" stroke="#727272" stroke-width="2.400"/><path d="M26.700 1.400v28.200" stroke="#727272" stroke-width="2.400"/><path d="M30.500 8.300h5M30.500 12.800h5M30.500 17.300h5" stroke="#727272" stroke-width="1.800" stroke-linecap="round"/></svg>
<svg class="abs" style="left:563.800px;top:92px" width="26.200" height="26.200" viewBox="0 0 28 28"><g fill="none" stroke="#767676" stroke-width="2.100"><rect x="1.500" y="1.500" width="9.500" height="9.500"/><rect x="17" y="1.500" width="9.500" height="9.500"/><rect x="1.500" y="17" width="9.500" height="9.500"/><rect x="17" y="17" width="9.500" height="9.500"/><path d="M11 6.200h6M6.200 11v6M21.800 11v6M11 21.800h6"/></g></svg>
<div class="sep" style="left:608px;top:94px;height:23px"></div>
<svg class="abs" style="left:624px;top:91px" width="19" height="29" viewBox="0 0 19 29"><path d="M15.500 2.500 3.500 14.500 15.500 26.500" fill="none" stroke="#6a6a6a" stroke-width="2.600" stroke-linecap="round" stroke-linejoin="round"/></svg>
<svg class="abs" style="left:665px;top:91px" width="19" height="29" viewBox="0 0 19 29"><path d="M3.500 2.500 15.500 14.500 3.500 26.500" fill="none" stroke="#b4b4b4" stroke-width="2.600" stroke-linecap="round" stroke-linejoin="round"/></svg>
<div class="sep" style="left:698px;top:94px;height:23px"></div>
<svg class="abs" style="left:747.600px;top:93.800px" width="18.800" height="23.300" viewBox="0 0 20 25"><path d="M4.200 1.300h7.300l7.200 7.200v12.300c0 1.700-1.200 2.900-2.900 2.900H4.200c-1.700 0-2.900-1.200-2.900-2.900V4.200c0-1.700 1.200-2.900 2.900-2.900z" fill="none" stroke="#5a6472" stroke-width="2.100" stroke-linejoin="round"/><path d="M11.200 1.500v4.800c0 1.400.8 2.200 2.200 2.200h5" fill="none" stroke="#5a6472" stroke-width="2.100"/></svg>
<div class="tab" style="left:780.6px;letter-spacing:0.006px">No Editor</div>
<div class="abs" style="left:918px;top:78px;width:328px;height:54px;background:#d6e5fb"></div>
<svg class="abs" style="left:965.6px;top:96.8px" width="23.6" height="19" viewBox="2.42 3.42 18.1 16.19" preserveAspectRatio="none"><path fill="#f06a37" d="M13.543 3.41c4.114 2.47 6.545 7.162 5.549 11.131-.024.093-.05.181-.076.272l.002.001c2.062 2.538 1.5 5.258 1.236 4.745-1.072-2.086-3.066-1.568-4.088-1.043a6.803 6.803 0 0 1-.281.158l-.02.012-.002.002c-2.115 1.123-4.957 1.205-7.812-.022a12.568 12.568 0 0 1-5.64-4.838c.649.48 1.35.902 2.097 1.252 3.019 1.414 6.051 1.311 8.197-.002C9.651 12.73 7.101 9.67 5.146 7.191a10.628 10.628 0 0 1-1.005-1.384c2.34 2.142 6.038 4.83 7.365 5.576C8.69 8.408 6.208 4.743 6.324 4.86c4.436 4.47 8.528 6.996 8.528 6.996.154.085.27.154.36.213.085-.215.16-.437.224-.668.708-2.588-.09-5.548-1.893-7.992z"/></svg>
<div class="tab" style="left:1001.0px;letter-spacing:0.297px;color:#2c7af5">TodoListViewModel</div>
<svg class="abs" style="left:1294px;top:93.5px" width="22" height="23" viewBox="0 0 29 30"><circle cx="4.500" cy="4.500" r="3.600" fill="#2c7af5"/><circle cx="4.500" cy="25.500" r="3.600" fill="#2c7af5"/><circle cx="24.500" cy="6.500" r="3.600" fill="#2c7af5"/><path d="M4.500 4.500v21M4.500 17.500c11 0 20-1.500 20-11" fill="none" stroke="#2c7af5" stroke-width="3"/></svg>
<div class="tab" style="left:1329.8px;letter-spacing:0.15px;font-style:italic">Todo-CloudDatabase</div>
<div class="sep" style="left:1590px;top:94px;height:23px"></div>
<svg class="abs" style="left:1639.8px;top:96.8px" width="23.6" height="19" viewBox="2.42 3.42 18.1 16.19" preserveAspectRatio="none"><path fill="#f06a37" d="M13.543 3.41c4.114 2.47 6.545 7.162 5.549 11.131-.024.093-.05.181-.076.272l.002.001c2.062 2.538 1.5 5.258 1.236 4.745-1.072-2.086-3.066-1.568-4.088-1.043a6.803 6.803 0 0 1-.281.158l-.02.012-.002.002c-2.115 1.123-4.957 1.205-7.812-.022a12.568 12.568 0 0 1-5.64-4.838c.649.48 1.35.902 2.097 1.252 3.019 1.414 6.051 1.311 8.197-.002C9.651 12.73 7.101 9.67 5.146 7.191a10.628 10.628 0 0 1-1.005-1.384c2.34 2.142 6.038 4.83 7.365 5.576C8.69 8.408 6.208 4.743 6.324 4.86c4.436 4.47 8.528 6.996 8.528 6.996.154.085.27.154.36.213.085-.215.16-.437.224-.668.708-2.588-.09-5.548-1.893-7.992z"/></svg>
<div class="tab" style="left:1675.7px;letter-spacing:0.002px">TodoItem</div>
<div class="sep" style="left:1810px;top:94px;height:23px"></div>
<svg class="abs" style="left:1859.8px;top:96.8px" width="23.6" height="19" viewBox="2.42 3.42 18.1 16.19" preserveAspectRatio="none"><path fill="#f06a37" d="M13.543 3.41c4.114 2.47 6.545 7.162 5.549 11.131-.024.093-.05.181-.076.272l.002.001c2.062 2.538 1.5 5.258 1.236 4.745-1.072-2.086-3.066-1.568-4.088-1.043a6.803 6.803 0 0 1-.281.158l-.02.012-.002.002c-2.115 1.123-4.957 1.205-7.812-.022a12.568 12.568 0 0 1-5.64-4.838c.649.48 1.35.902 2.097 1.252 3.019 1.414 6.051 1.311 8.197-.002C9.651 12.73 7.101 9.67 5.146 7.191a10.628 10.628 0 0 1-1.005-1.384c2.34 2.142 6.038 4.83 7.365 5.576C8.69 8.408 6.208 4.743 6.324 4.86c4.436 4.47 8.528 6.996 8.528 6.996.154.085.27.154.36.213.085-.215.16-.437.224-.668.708-2.588-.09-5.548-1.893-7.992z"/></svg>
<div class="tab" style="left:1895.0px;letter-spacing:-0.374px">Supabase</div>
<div class="sep" style="left:2036px;top:94px;height:23px"></div>
<svg class="abs" style="left:2859px;top:92px" width="26" height="26" viewBox="0 0 26 26"><path d="M6.500 8h17M17.500 2 23.500 8 17.500 14" fill="none" stroke="#767676" stroke-width="2" stroke-linecap="round" stroke-linejoin="round"/><path d="M19.500 18.500H2.500M8.500 12.500 2.500 18.500 8.500 24.500" fill="none" stroke="#767676" stroke-width="2" stroke-linecap="round" stroke-linejoin="round"/></svg>
<svg class="abs" style="left:2905px;top:91px" width="37" height="28" viewBox="0 0 37 28"><path d="M1.500 2.500h10.500M1.500 8.200h14.500M1.500 14h10.500M1.500 19.800h14.500M1.500 25.500h14.500" stroke="#767676" stroke-width="1.900"/><rect x="21.200" y="1.200" width="14.600" height="25.600" rx=".6" fill="none" stroke="#767676" stroke-width="2.100"/><rect x="26" y="6" width="5" height="16" fill="none" stroke="#767676" stroke-width="1.700"/></svg>
<div class="sep" style="left:2960px;top:94px;height:23px"></div>
<svg class="abs" style="left:2979px;top:91px" width="28" height="28" viewBox="0 0 28 28"><rect x="1.200" y="1.200" width="25.600" height="25.600" rx="4.500" fill="none" stroke="#767676" stroke-width="2.100"/><path d="M9.200 1.200v25.600" stroke="#767676" stroke-width="2"/><path d="M13.500 14h9M18 9.500v9" stroke="#767676" stroke-width="2" stroke-linecap="round"/></svg>
<svg class="abs" style="left:563px;top:147.5px" width="26" height="26" viewBox="0 0 30 30"><rect x="0" y="0" width="30" height="30" rx="7" fill="#1f7cf7"/><rect x="2.6" y="2.6" width="24.8" height="24.800" rx="4.6" fill="none" stroke="#fff" stroke-opacity=".8" stroke-width="1.300"/><path d="M9.300 21.500 15.800 8.500M20.700 21.500 13.600 7.300M6.800 18.200H23.200" fill="none" stroke="#fff" stroke-width="2.1" stroke-linecap="round"/></svg>
<div class="bc" style="left:601.3px;letter-spacing:0.261px">TodoList</div>
<svg class="abs" style="left:700px;top:150.500px" width="9" height="21" viewBox="0 0 9 21"><path d="M2 1.800 6.300 10.500 2 19.200" fill="none" stroke="#6f6f6f" stroke-width="2.300" stroke-linecap="round" stroke-linejoin="round"/></svg>
<svg class="abs" style="left:725px;top:150px" width="25.2" height="20" viewBox="0 0 30 24"><path fill="#93989d" d="M3.2 0h7.2c1 0 1.7.3 2.4 1l1 1c.5.5 1 .7 1.8.7h11.2c1.8 0 3.2 1.4 3.2 3.2V6H0V3.2C0 1.4 1.4 0 3.2 0z"/><path fill="#93989d" d="M0 7.6h30v13.2c0 1.8-1.4 3.2-3.2 3.2H3.2C1.4 24 0 22.600 0 20.8z"/></svg>
<div class="bc" style="left:763.2px;letter-spacing:0.275px">TodoList</div>
<svg class="abs" style="left:862px;top:150.500px" width="9" height="21" viewBox="0 0 9 21"><path d="M2 1.800 6.300 10.500 2 19.200" fill="none" stroke="#6f6f6f" stroke-width="2.300" stroke-linecap="round" stroke-linejoin="round"/></svg>
<svg class="abs" style="left:887px;top:150px" width="25.2" height="20" viewBox="0 0 30 24"><path fill="#93989d" d="M3.2 0h7.2c1 0 1.7.3 2.4 1l1 1c.5.5 1 .7 1.8.7h11.2c1.8 0 3.2 1.4 3.2 3.2V6H0V3.2C0 1.4 1.4 0 3.2 0z"/><path fill="#93989d" d="M0 7.6h30v13.2c0 1.8-1.4 3.2-3.2 3.2H3.2C1.4 24 0 22.600 0 20.8z"/></svg>
<div class="bc" style="left:924.9px;letter-spacing:0.042px">ViewModel</div>
<svg class="abs" style="left:1050px;top:150.500px" width="9" height="21" viewBox="0 0 9 21"><path d="M2 1.800 6.300 10.500 2 19.200" fill="none" stroke="#6f6f6f" stroke-width="2.300" stroke-linecap="round" stroke-linejoin="round"/></svg>
<svg class="abs" style="left:1075.4px;top:150px" width="24.6" height="20.3" viewBox="2.42 3.42 18.1 16.19" preserveAspectRatio="none"><path fill="#f06a37" d="M13.543 3.41c4.114 2.47 6.545 7.162 5.549 11.131-.024.093-.05.181-.076.272l.002.001c2.062 2.538 1.5 5.258 1.236 4.745-1.072-2.086-3.066-1.568-4.088-1.043a6.803 6.803 0 0 1-.281.158l-.02.012-.002.002c-2.115 1.123-4.957 1.205-7.812-.022a12.568 12.568 0 0 1-5.64-4.838c.649.48 1.35.902 2.097 1.252 3.019 1.414 6.051 1.311 8.197-.002C9.651 12.73 7.101 9.67 5.146 7.191a10.628 10.628 0 0 1-1.005-1.384c2.34 2.142 6.038 4.83 7.365 5.576C8.69 8.408 6.208 4.743 6.324 4.86c4.436 4.47 8.528 6.996 8.528 6.996.154.085.27.154.36.213.085-.215.16-.437.224-.668.708-2.588-.09-5.548-1.893-7.992z"/></svg>
<div class="bc" style="left:1113.0px;letter-spacing:0.266px">TodoListViewModel</div>
<svg class="abs" style="left:1328px;top:150.500px" width="9" height="21" viewBox="0 0 9 21"><path d="M2 1.800 6.300 10.500 2 19.200" fill="none" stroke="#6f6f6f" stroke-width="2.300" stroke-linecap="round" stroke-linejoin="round"/></svg>
<div class="abs" style="left:1352px;top:146.500px;width:28px;height:27px;border-radius:6px;background:#3479f6;color:#fff;font-weight:bold;font-size:22px;line-height:27px;text-align:center">M</div>
<div class="bc" style="left:1390.5px;letter-spacing:0.347px">delete(_:)</div>
<div class="abs" style="left:560px;top:690px;width:10px;height:880px;box-sizing:border-box;border:2px solid #3e7ff5;border-radius:5px;background:#b3cdfb"></div>
<div class="abs" style="left:560px;top:1615px;width:10px;height:43px;box-sizing:border-box;border:2px solid #3e7ff5;border-radius:5px;background:#b3cdfb"></div>
<div class="abs" style="left:546px;top:602px;width:2478px;height:44px;background:#edf3fd"></div>
<div class="abs" style="left:652px;top:260px;width:14px;height:1527px;background:#e9e9e9;border-radius:0 0 7px 7px;box-sizing:border-box;border-bottom:1.300px solid rgba(255,255,255,.6);"></div>
<div class="abs" style="left:652px;top:260px;width:14px;height:296px;background:#d3d3d3;border-radius:0 0 7px 7px;box-sizing:border-box;border-bottom:1.300px solid rgba(255,255,255,.6);"></div>
<div class="abs" style="left:652px;top:260px;width:14px;height:252px;background:#bebebe;border-radius:0 0 7px 7px;box-sizing:border-box;border-bottom:1.300px solid rgba(255,255,255,.6);"></div>
<div class="abs" style="left:652px;top:260px;width:14px;height:208px;background:#acacac;border-radius:0 0 7px 7px;box-sizing:border-box;border-bottom:1.300px solid rgba(255,255,255,.6);"></div>
<div class="abs" style="left:652px;top:359px;width:14px;height:2px;background:#d8d8d8"></div>
<div class="abs" style="left:652px;top:603.5px;width:14px;height:1097.0px;background:#d3d3d3;border-radius:7px 7px 7px 7px;box-sizing:border-box;border-top:1.300px solid rgba(255,255,255,.6);border-bottom:1.300px solid rgba(255,255,255,.6);"></div>
<div class="abs" style="left:652px;top:735.5px;width:14px;height:877.0px;background:#bebebe;border-radius:7px 7px 7px 7px;box-sizing:border-box;border-top:1.300px solid rgba(255,255,255,.6);border-bottom:1.300px solid rgba(255,255,255,.6);"></div>
<div class="abs" style="left:652px;top:823.5px;width:14px;height:657.0px;background:#acacac;border-radius:7px 7px 7px 7px;box-sizing:border-box;border-top:1.300px solid rgba(255,255,255,.6);border-bottom:1.300px solid rgba(255,255,255,.6);"></div>
<div class="abs" style="left:652px;top:1371px;width:14px;height:2px;background:#d8d8d8"></div>
<div class="abs" style="left:652px;top:602px;width:14px;height:44px;background:rgba(164,184,218,.3)"></div>
<div class="ln" style="top:250px">72</div>
<div class="code" style="top:250px">                <span class="k">self</span>.<span class="p">todos</span>.<span class="f">append</span>(newlyInsertedItem)</div>
<div class="ln" style="top:294px">73</div>
<div class="ln" style="top:338px">74</div>
<div class="code" style="top:338px">            } <span class="k">catch</span> {</div>
<div class="ln" style="top:382px">75</div>
<div class="code" style="top:382px">                <span class="f">debugPrint</span>(error)</div>
<div class="ln" style="top:426px">76</div>
<div class="code" style="top:426px">            }</div>
<div class="ln" style="top:470px">77</div>
<div class="code" style="top:470px">        }</div>
<div class="ln" style="top:514px">78</div>
<div class="code" style="top:514px">    }</div>
<div class="ln" style="top:558px">79</div>
<div class="ln" style="color:#1c1c1c;top:602px">80</div>
<div class="code" style="top:602px">    <span class="k">func</span> <span class="d">delete</span>(<span class="d">_</span> todo: <span class="pt">TodoItem</span>) {</div>
<div class="ln" style="top:646px">81</div>
<div class="ln" style="top:690px">82</div>
<div class="code" style="top:690px">        <span class="c">// Create a unit of asynchronous work to add the to-do item</span></div>
<div class="ln" style="top:734px">83</div>
<div class="code" style="top:734px">        <span class="s">Task</span> {</div>
<div class="ln" style="top:778px">84</div>
<div class="ln" style="top:822px">85</div>
<div class="code" style="top:822px">            <span class="k">do</span> {</div>
<div class="ln" style="top:866px">86</div>
<div class="ln" style="top:910px">87</div>
<div class="code" style="top:910px">                <span class="c">// Run the delete command</span></div>
<div class="ln" style="top:954px">88</div>
<div class="code" style="top:954px">                <span class="k">try</span> <span class="k">await</span> <span class="p">supabase</span></div>
<div class="ln" style="top:998px">89</div>
<div class="code" style="top:998px">                    .from(<span class="r">"todos"</span>)</div>
<div class="ln" style="top:1042px">90</div>
<div class="code" style="top:1042px">                    .<span class="f">delete</span>()</div>
<div class="ln" style="top:1086px">91</div>
<div class="code" style="top:1086px">                    .eq(<span class="r">"id"</span>, value: todo.<span class="p">id</span>!)  <span class="c">// Only delete the row whose id</span></div>
<div class="ln" style="top:1130px">92</div>
<div class="code" style="top:1130px">                    .execute()                  <span class="c">// matches that of the to-do being deleted</span></div>
<div class="ln" style="top:1174px">93</div>
<div class="ln" style="top:1218px">94</div>
<div class="code" style="top:1218px">                <span class="c">// Update the list of to-do items held in memory to reflect the deletion</span></div>
<div class="ln" style="top:1262px">95</div>
<div class="code" style="top:1262px">                <span class="k">try</span> <span class="k">await</span> <span class="k">self</span>.<span class="p">getTodos</span>()</div>
<div class="ln" style="top:1306px">96</div>
<div class="ln" style="top:1350px">97</div>
<div class="code" style="top:1350px">            } <span class="k">catch</span> {</div>
<div class="ln" style="top:1394px">98</div>
<div class="code" style="top:1394px">                <span class="f">debugPrint</span>(error)</div>
<div class="ln" style="top:1438px">99</div>
<div class="code" style="top:1438px">            }</div>
<div class="ln" style="top:1482px">100</div>
<div class="ln" style="top:1526px">101</div>
<div class="ln" style="top:1570px">102</div>
<div class="code" style="top:1570px">        }</div>
<div class="ln" style="top:1614px">103</div>
<div class="ln" style="top:1658px">104</div>
<div class="code" style="top:1658px">    }</div>
<div class="ln" style="top:1702px">105</div>
<div class="ln" style="top:1746px">106</div>
<div class="code" style="top:1746px">}</div>
<div class="ln" style="top:1790px">107</div>
<div class="abs" style="left:546px;top:189px;width:2478px;height:89px;background:#f3f3f3;box-shadow:0 3px 10px rgba(0,0,0,.13);clip-path:inset(0 0 -30px 0)"></div>
<div class="hl" style="left:546px;top:188px;width:2478px;height:2px;background:#dcdcdc"></div>
<div class="hl" style="left:546px;top:232.500px;width:2478px;height:2px;background:#d8d8d8"></div>
<div class="hl" style="left:546px;top:276px;width:2478px;height:2px;background:#d4d4d4"></div>
<div class="ln" style="top:189.5px">11</div>
<div class="code" style="top:189.5px"><span class="k">class</span> <span class="ty">TodoListViewModel</span> {</div>
<div class="ln" style="top:233.5px">43</div>
<div class="code" style="top:233.5px">    <span class="k">func</span> <span class="d">createToDo</span>(<span class="d">withTitle</span> title: <span class="s">String</span>) {</div>
<div class="abs" style="left:546px;top:1833px;width:2478px;height:55px;background:#fff"></div>
<div class="hl" style="left:546px;top:1831px;width:2478px;height:2px;background:#dedede"></div>
<svg class="abs" style="left:569px;top:1851px" width="30" height="19" viewBox="0 0 30 19"><path d="M3 0h18.500c1 0 1.800.4 2.400 1.200l5 6.300c.9 1.100.9 2.900 0 4l-5 6.300c-.6.800-1.400 1.200-2.400 1.200H3c-1.800 0-3-1.200-3-3V3c0-1.800 1.200-3 3-3z" fill="#3478f6"/></svg>
<div class="t" style="left:2760.7px;top:1847.700px;font-size:22.500px;line-height:28px;color:#808080;letter-spacing:0.678px;-webkit-text-stroke:.25px #808080">Line: 80  Col: 13</div>
<div class="sep" style="left:2954px;top:1849px;height:23px"></div>
<svg class="abs" style="left:2973px;top:1848px" width="27" height="26" viewBox="0 0 27 26"><rect x="1.200" y="1.200" width="24.600" height="23.600" rx="4.500" fill="none" stroke="#7a7a7a" stroke-width="2"/><rect x="4.500" y="16" width="18" height="5.500" rx="1.500" fill="#7a7a7a"/></svg>
</body></html>
